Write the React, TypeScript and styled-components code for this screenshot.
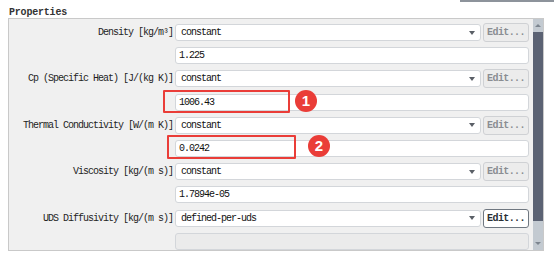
import { Fragment } from "react";
import styled, { createGlobalStyle } from "styled-components";

const GlobalStyle = createGlobalStyle`
  body {
    margin: 0;
    background: #ffffff;
    font-family: "Liberation Mono", "DejaVu Sans Mono", monospace;
  }
`;

const Page = styled.div`
  position: relative;
  width: 554px;
  height: 254px;
  overflow: hidden;
`;

const TopLine = styled.div`
  position: absolute;
  top: 0;
  right: 0;
  width: 94px;
  height: 2px;
  background: #8d939b;
`;

const Title = styled.div`
  padding: 8px 0 0 9px;
  height: 10px;
  line-height: 10px;
  font-size: 10px;
  font-weight: bold;
  letter-spacing: -0.2px;
  color: #333;
`;

const Panel = styled.div`
  display: flex;
  margin-left: 8px;
  width: 534px;
  height: 231px;
  border: 1px solid #c9c9c9;
  background: #f0f0f0;
`;

const Grid = styled.div`
  display: grid;
  grid-template-columns: 164px 354px;
  grid-auto-rows: 17px;
  column-gap: 2px;
  row-gap: 6.2px;
  padding-top: 5px;
  margin-right: 4px;
`;

const Label = styled.div`
  font-size: 10px;
  letter-spacing: -1px;
  line-height: 17px;
  text-align: right;
  color: #1e1e1e;
  white-space: nowrap;
`;

const ControlRow = styled.div`
  display: flex;
  align-items: center;
  gap: 2px;
  grid-column: 2;
`;

const Select = styled.div`
  flex: 1;
  height: 15px;
  display: flex;
  align-items: center;
  justify-content: space-between;
  padding: 0 5px;
  background: #fff;
  border: 1px solid #d3d6da;
  border-radius: 3px;
  font-size: 10px;
  letter-spacing: -1px;
  color: #111;
`;

const Arrow = styled.span`
  width: 0;
  height: 0;
  border-left: 3px solid transparent;
  border-right: 3px solid transparent;
  border-top: 4px solid #5a5f66;
`;

const EditButton = styled.div<{ $active?: boolean }>`
  width: 44px;
  height: 17px;
  display: flex;
  align-items: center;
  justify-content: center;
  border-radius: 3px;
  border: 1px solid ${(p) => (p.$active ? "#6f7780" : "#cfd1d4")};
  background: ${(p) => (p.$active ? "#ffffff" : "#ececec")};
  color: ${(p) => (p.$active ? "#2a2f36" : "#8a8d92")};
  font-size: 10px;
  font-weight: bold;
  letter-spacing: -0.6px;
`;

const Input = styled.div<{ $disabled?: boolean }>`
  grid-column: 2;
  height: 15px;
  line-height: 15px;
  padding: 0 3px;
  border: 1px solid #d3d6da;
  border-radius: 3px;
  background: ${(p) => (p.$disabled ? "#ebebeb" : "#ffffff")};
  font-size: 10px;
  letter-spacing: -1px;
  color: #111;
`;

const Scrollbar = styled.div`
  display: flex;
  flex-direction: column;
  width: 10px;
  background: #c3cad1;
`;

const ScrollArrow = styled.div<{ $down?: boolean }>`
  height: 13px;
  display: flex;
  align-items: center;
  justify-content: center;
  &::after {
    content: "";
    border-left: 3px solid transparent;
    border-right: 3px solid transparent;
    ${(p) =>
      p.$down
        ? "border-top: 3px solid #7d858f;"
        : "border-bottom: 3px solid #7d858f;"}
  }
`;

const Thumb = styled.div`
  height: 189px;
  background: #5b6273;
`;

const Track = styled.div`
  flex: 1;
`;

const Mark = styled.div`
  position: absolute;
  border: 2px solid #ea3d38;
  border-radius: 1px;
`;

const Badge = styled.div`
  position: absolute;
  width: 22px;
  height: 22px;
  border-radius: 50%;
  background: #ea3d38;
  color: #fff;
  font-family: "Liberation Sans", Arial, sans-serif;
  font-weight: bold;
  font-size: 15px;
  line-height: 22px;
  text-align: center;
`;

type Prop = {
  label: string;
  method: string;
  value: string;
  disabled?: boolean;
  active?: boolean;
};

const props: Prop[] = [
  { label: "Density [kg/m³]", method: "constant", value: "1.225" },
  { label: "Cp (Specific Heat) [J/(kg K)]", method: "constant", value: "1006.43" },
  { label: "Thermal Conductivity [W/(m K)]", method: "constant", value: "0.0242" },
  { label: "Viscosity [kg/(m s)]", method: "constant", value: "1.7894e-05" },
  {
    label: "UDS Diffusivity [kg/(m s)]",
    method: "defined-per-uds",
    value: "",
    disabled: true,
    active: true,
  },
];

export default function App() {
  return (
    <Page>
      <GlobalStyle />
      <TopLine />
      <Title>Properties</Title>
      <Panel>
        <Grid>
          {props.map((p) => (
            <Fragment key={p.label}>
              <Label>{p.label}</Label>
              <ControlRow>
                <Select>
                  <span>{p.method}</span>
                  <Arrow />
                </Select>
                <EditButton $active={p.active}>Edit...</EditButton>
              </ControlRow>
              <Input $disabled={p.disabled}>{p.value}</Input>
            </Fragment>
          ))}
        </Grid>
        <Scrollbar>
          <ScrollArrow />
          <Thumb />
          <Track />
          <ScrollArrow $down />
        </Scrollbar>
      </Panel>
      <Mark style={{ left: 163, top: 90, width: 123, height: 19 }} />
      <Badge style={{ left: 295, top: 90 }}>1</Badge>
      <Mark style={{ left: 167, top: 135, width: 125, height: 20 }} />
      <Badge style={{ left: 308, top: 135 }}>2</Badge>
    </Page>
  );
}
